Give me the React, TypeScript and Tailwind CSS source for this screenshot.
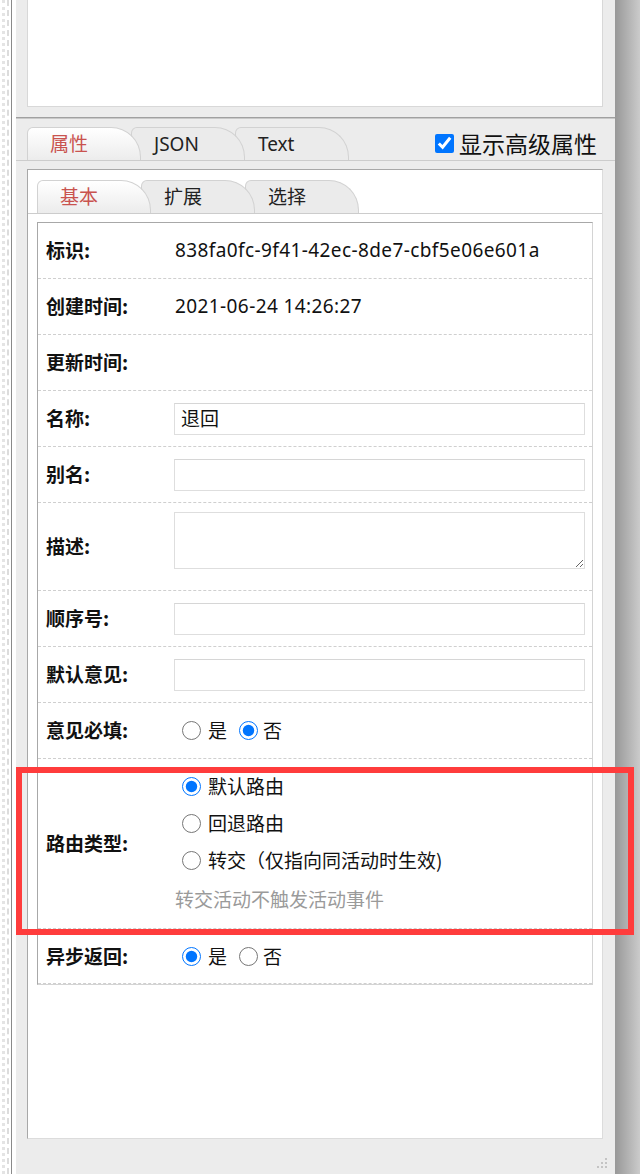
import React from "react";

const FONT = { fontFamily: '"Noto Sans", "Noto Sans CJK SC", sans-serif' };
const CJK = { fontFamily: '"Noto Sans CJK SC", sans-serif' };

function Tab({ label, active, z, first }: { label: string; active?: boolean; z: string; first?: boolean }) {
  return (
    <div
      className={`relative ${z} ${first ? "" : "-ml-[10px]"} w-[114px] h-full flex items-center pl-[22px] border border-b-0 border-[#d2d2d2] rounded-tl-[6px] rounded-tr-[30px] ${
        active ? "bg-gradient-to-b from-[#ffffff] to-[#ececec] text-[#c9534f]" : "bg-[#ebebeb] text-[#222]"
      } text-[19px]`}
    >
      {label}
    </div>
  );
}

function Row({ label, children, h }: { label: string; children?: React.ReactNode; h: string }) {
  return (
    <div className={`flex items-center ${h} border-b border-dashed border-[#cfcfcf]`}>
      <div className="w-[136px] pl-[8px] font-bold text-[19px] text-[#111]" style={CJK}>
        {label}:
      </div>
      <div className="flex-1 pr-[7px] text-[19px] text-[#111]">{children}</div>
    </div>
  );
}

function Input({ value }: { value?: string }) {
  return (
    <div className="h-[32px] border border-[#dedede] border-t-[#d6d6d6] flex items-center px-[6px] text-[19px]" style={CJK}>
      {value}
    </div>
  );
}

function Radio({ checked }: { checked?: boolean }) {
  return <input type="radio" readOnly checked={!!checked} className="m-0 w-[19px] h-[19px] accent-[#0075ff]" />;
}

function YesNo({ yes }: { yes: boolean }) {
  return (
    <div className="flex items-center pl-[8px]" style={CJK}>
      <Radio checked={yes} />
      <span className="ml-[7px] text-[19px]">是</span>
      <span className="ml-[12px] flex items-center">
        <Radio checked={!yes} />
      </span>
      <span className="ml-[5px] text-[19px]">否</span>
    </div>
  );
}

export default function App() {
  return (
    <div className="relative w-[640px] h-[1174px] flex bg-white overflow-hidden" style={FONT}>
      {/* left dotted strip */}
      <div className="w-[12px] h-full flex border-r border-[#8a8a8a] bg-white">
        <div className="ml-[2px] w-[3px] h-full border-l-[3px] border-dotted border-[#e4e4e4]" />
        <div className="ml-[2px] w-[2px] h-full border-l-[2px] border-dashed border-[#dcdcdc]" />
      </div>
      <div className="w-[4px] h-full bg-white" />

      {/* main panel */}
      <div className="w-[599px] h-full bg-[#ececec] flex flex-col">
        {/* top white box */}
        <div className="ml-[11px] mr-[12px] h-[107px] bg-white border-l border-r border-b border-[#d8d8d8]" />
        <div className="mt-[10px] h-[2px] bg-[#a0a0a0] border-b border-[#c8c8c8]" />

        {/* tabs row */}
        <div className="mt-[8px] h-[33px] flex items-end">
          <div className="ml-[11px] h-full flex">
            <Tab label="属性" active z="z-30" first />
            <Tab label="JSON" z="z-20" />
            <Tab label="Text" z="z-10" />
          </div>
          <div className="ml-auto mr-[18px] h-full flex items-center">
            <input type="checkbox" readOnly checked className="m-0 w-[19px] h-[19px] accent-[#0075ff]" />
            <span className="ml-[5px] text-[23px] text-[#111] leading-none" style={CJK}>
              显示高级属性
            </span>
          </div>
        </div>
        <div className="h-[1px] bg-[#cccccc]" />

        {/* inner box */}
        <div className="mt-[8px] ml-[11px] mr-[12px] h-[970px] bg-white border border-[#dcdcdc] border-t-[#a8a8a8] border-l-[#a8a8a8] flex flex-col">
          <div className="mt-[10px] h-[33px] flex pl-[9px]">
            <Tab label="基本" active z="z-30" first />
            <Tab label="扩展" z="z-20" />
            <Tab label="选择" z="z-10" />
          </div>
          <div className="h-[1px] bg-[#cccccc]" />

          {/* table */}
          <div className="mt-[8px] ml-[9px] mr-[9px] border border-[#d4d4d4] border-l-[#a8a8a8] border-t-[#a8a8a8] flex flex-col">
            <Row label="标识" h="h-[56px]">
              <span className="pl-[1px] tracking-[0.4px]">838fa0fc-9f41-42ec-8de7-cbf5e06e601a</span>
            </Row>
            <Row label="创建时间" h="h-[56px]">
              <span className="pl-[1px] tracking-[0.4px]">2021-06-24 14:26:27</span>
            </Row>
            <Row label="更新时间" h="h-[56px]" />
            <Row label="名称" h="h-[56px]">
              <Input value="退回" />
            </Row>
            <Row label="别名" h="h-[56px]">
              <Input />
            </Row>
            <Row label="描述" h="h-[88px]">
              <textarea readOnly className="block w-full h-[57px] mb-[13px] border border-[#dedede] outline-none" />
            </Row>
            <Row label="顺序号" h="h-[56px]">
              <Input />
            </Row>
            <Row label="默认意见" h="h-[56px]">
              <Input />
            </Row>
            <Row label="意见必填" h="h-[56px]">
              <YesNo yes={false} />
            </Row>
            <Row label="路由类型" h="h-[170px]">
              <div className="flex flex-col pl-[8px] text-[19px]" style={CJK}>
                <div className="h-[37px] flex items-center">
                  <Radio checked />
                  <span className="ml-[7px]">默认路由</span>
                </div>
                <div className="h-[37px] flex items-center">
                  <Radio />
                  <span className="ml-[7px]">回退路由</span>
                </div>
                <div className="h-[37px] flex items-center">
                  <Radio />
                  <span className="ml-[7px]">转交（仅指向同活动时生效)</span>
                </div>
                <div className="h-[40px] flex items-center -ml-[7px] text-[#9a9a9a] text-[19px]">转交活动不触发活动事件</div>
              </div>
            </Row>
            <Row label="异步返回" h="h-[55px]">
              <YesNo yes />
            </Row>
          </div>
        </div>

        {/* bottom with resize grip */}
        <div className="flex-1 flex items-end justify-end pr-[7px] pb-[5px]">
          <svg width="12" height="12" viewBox="0 0 12 12">
            <rect x="9" y="1" width="2" height="2" fill="#c4c4c4" />
            <rect x="5" y="5" width="2" height="2" fill="#c4c4c4" />
            <rect x="9" y="5" width="2" height="2" fill="#c4c4c4" />
            <rect x="1" y="9" width="2" height="2" fill="#c4c4c4" />
            <rect x="5" y="9" width="2" height="2" fill="#c4c4c4" />
            <rect x="9" y="9" width="2" height="2" fill="#c4c4c4" />
          </svg>
        </div>
      </div>

      {/* right gradient edge */}
      <div className="w-[25px] h-full bg-gradient-to-r from-[#989898] to-[#cbcbcb]" />

      {/* red annotation box */}
      <div className="absolute left-[16px] top-[767px] w-[618px] h-[168px] border-[6px] border-[#ff3c3c] pointer-events-none" />
    </div>
  );
}
